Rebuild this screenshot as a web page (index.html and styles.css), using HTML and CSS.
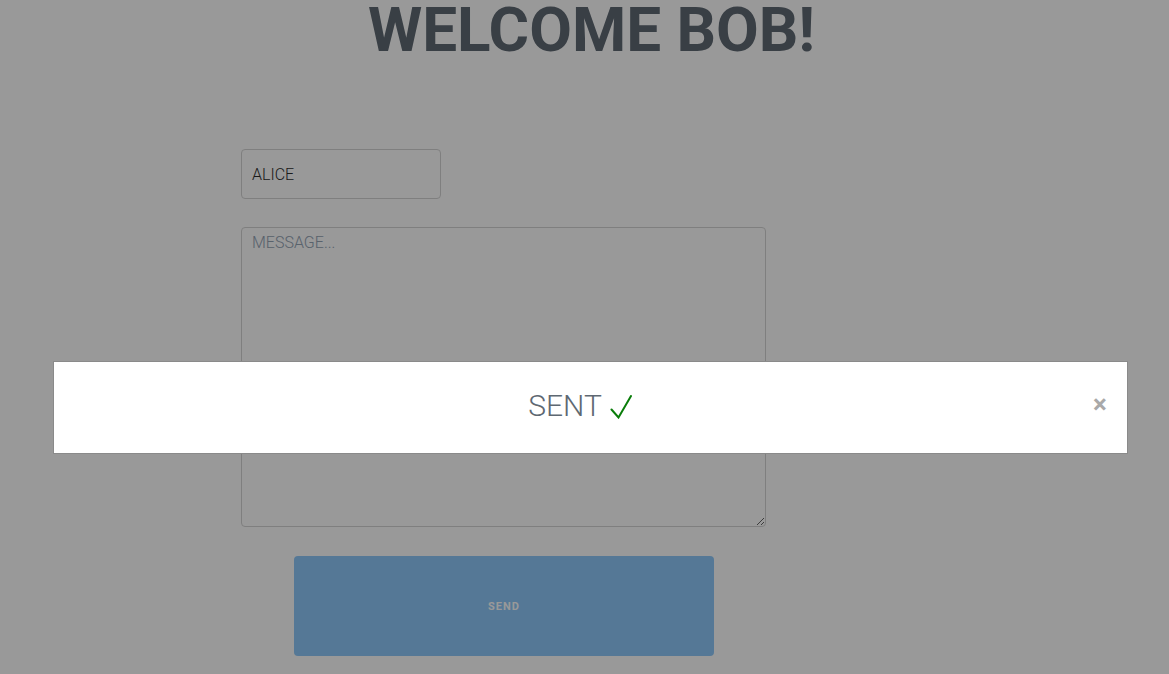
FILE: index.html
```html
<!DOCTYPE html>
<html lang="en">
<head>
<meta charset="utf-8">
<title>Welcome Bob</title>
<link rel="stylesheet" href="styles.css">
</head>
<body>
<main class="page">
  <h1 class="title">WELCOME BOB!</h1>
  <form class="form">
    <input class="field name" type="text" value="ALICE">
    <textarea class="field message" placeholder="MESSAGE..."></textarea>
    <button class="send" type="button">SEND</button>
  </form>
</main>
<div class="overlay"></div>
<div class="modal">
  <p class="modal-text">SENT<svg class="check" viewBox="0 0 22 24" width="22" height="24" aria-hidden="true"><path d="M1.5 14.5 L8.5 22.5 L21 1" fill="none" stroke="#0a7d0a" stroke-width="2" stroke-linecap="round" stroke-linejoin="miter"/></svg></p>
  <button class="close" type="button">×</button>
</div>
</body>
</html>
```

FILE: styles.css
```css
html, body {
  margin: 0;
  padding: 0;
  background: #ffffff;
  font-family: Roboto, "Liberation Sans", Arial, sans-serif;
  overflow: hidden;
}

.page {
  display: flex;
  flex-direction: column;
}

.title {
  margin: 0;
  padding-left: 14px;
  text-align: center;
  font-size: 62px;
  line-height: 59px;
  font-weight: 700;
  color: #5f6973;
}

.form {
  display: flex;
  flex-direction: column;
  align-items: flex-start;
  padding: 90px 0 0 241px;
}

.field {
  box-sizing: border-box;
  border: 1px solid #d4d4d4;
  border-radius: 4px;
  background: #ffffff;
  font-family: Roboto, "Liberation Sans", Arial, sans-serif;
  font-size: 16px;
  font-weight: 300;
  color: #2e2e2e;
  padding: 0 10px;
  outline: none;
}

.name {
  width: 200px;
  height: 50px;
}

.message {
  margin-top: 28px;
  width: 525px;
  height: 300px;
  padding-top: 5px;
  resize: both;
}

.message::placeholder {
  color: #94a3b4;
  opacity: 1;
}

.send {
  margin: 29px 0 0 53px;
  width: 420px;
  height: 100px;
  border: 0;
  border-radius: 4px;
  background: #8ec8fa;
  color: #ffffff;
  font-family: Roboto, "Liberation Sans", Arial, sans-serif;
  font-size: 11px;
  font-weight: 700;
  letter-spacing: 1px;
}

.overlay {
  position: fixed;
  inset: 0;
  background: rgba(0, 0, 0, 0.4);
}

.modal {
  position: fixed;
  left: 53px;
  right: 41px;
  top: 361px;
  height: 93px;
  box-sizing: border-box;
  border: 1px solid #8a8a8a;
  background: #ffffff;
  display: flex;
  align-items: center;
  padding: 0 20px 4px 20px;
}

.modal-text {
  flex: 1;
  margin: 0;
  padding-right: 7px;
  display: flex;
  align-items: flex-end;
  justify-content: center;
  gap: 8px;
  font-size: 30px;
  line-height: 30px;
  font-weight: 300;
  color: #5e6872;
}

.check {
  display: block;
  margin-bottom: 2px;
}

.close {
  border: 0;
  background: transparent;
  padding: 0 0 4px 0;
  width: 14px;
  font-family: Roboto, "Liberation Sans", Arial, sans-serif;
  font-size: 26px;
  font-weight: 700;
  line-height: 1;
  color: #a9a9a9;
}
```
